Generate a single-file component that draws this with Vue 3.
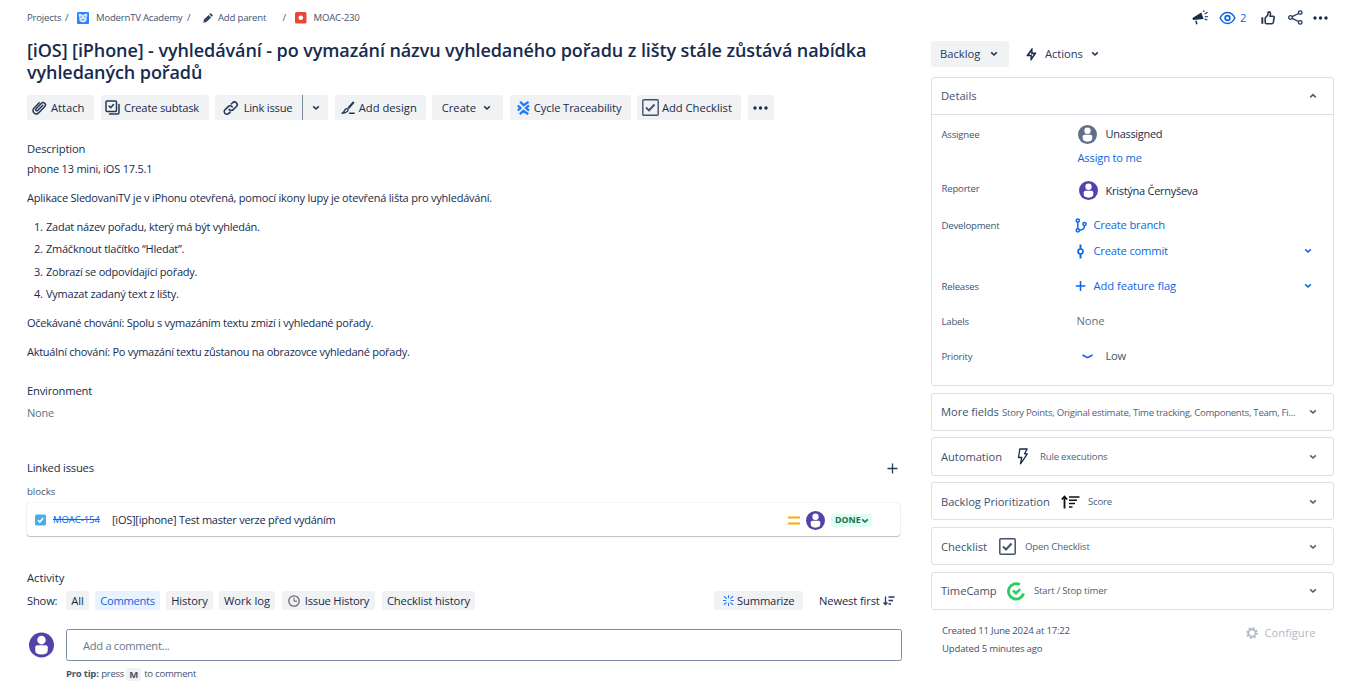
<script setup>
const steps = [
  'Zadat název pořadu, který má být vyhledán.',
  'Zmáčknout tlačítko “Hledat”.',
  'Zobrazí se odpovídající pořady.',
  'Vymazat zadaný text z lišty.',
]
const filters = [
  { label: 'All', cls: 'f-all' },
  { label: 'Comments', cls: 'f-comments active' },
  { label: 'History', cls: 'f-history' },
  { label: 'Work log', cls: 'f-worklog' },
  { label: 'Issue History', cls: 'f-issue', clock: true },
  { label: 'Checklist history', cls: 'f-checklist' },
]
const panels = [
  { title: 'More fields', sub: 'Story Points, Original estimate, Time tracking, Components, Team, Fi...', icon: '', cls: 'p-more' },
  { title: 'Automation', sub: 'Rule executions', icon: 'bolt', cls: 'p-auto' },
  { title: 'Backlog Prioritization', sub: 'Score', icon: 'sort', cls: 'p-backlog' },
  { title: 'Checklist', sub: 'Open Checklist', icon: 'check', cls: 'p-check' },
  { title: 'TimeCamp', sub: 'Start / Stop timer', icon: 'camp', cls: 'p-camp' },
]
</script>

<template>
  <div class="page">
    <main class="left">
      <nav class="crumbs">
        <span class="c-projects">Projects</span><span class="c-s1">/</span>
        <svg class="c-avatar" width="12" height="12" viewBox="0 0 12 12"><rect width="12" height="12" rx="1" fill="#2684ff" /><path d="M1.800 1.800h2.200l.9 1h2.200l.9-1h2.200v2.400L9.600 5.200v3.300L7.800 10.200H4.200L2.400 8.500V5.200L1.800 4.200z" fill="#d6e8ff" /><path d="M3.500 4.500h1.400v1.100H3.500zM7.100 4.500h1.400v1.100H7.100zM4.800 7.300h2.400v1H4.800z" fill="#2f7ae5" /></svg>
        <span class="c-name">ModernTV Academy</span><span class="c-s2">/</span>
        <svg class="c-pen" width="10" height="10" viewBox="0 0 10 10"><path d="M.3 9.700l.6-3.200L5.600 1.900l2.500 2.500L3.500 9zM6.200 1.300l.9-.9q.5-.4 1 0l1.500 1.500q.4.500 0 1l-.9.900z" fill="#344563" /></svg>
        <span class="c-parent">Add parent</span><span class="c-s3">/</span>
        <svg class="c-bug" width="12" height="12" viewBox="0 0 12 12"><rect width="11.500" height="11.500" rx="1.500" fill="#e5493a" /><circle cx="5.800" cy="5.800" r="2.300" fill="#fff" /></svg>
        <span class="c-key">MOAC-230</span>
      </nav>

      <h1>[iOS] [iPhone] - vyhledávání - po vymazání názvu vyhledaného pořadu z lišty stále zůstává nabídka<br>vyhledaných pořadů</h1>

      <div class="toolbar">
        <button class="btn b-attach">
          <svg width="15" height="16" viewBox="0 0 15 16" fill="none" stroke="#253858" stroke-width="1.500" stroke-linecap="round"><path d="M10.800 5.300L5.700 10.500a1.100 1.100 0 0 1-1.700-1.600L9.400 3.300a2.300 2.300 0 0 1 3.400 3.200L6.800 12.800a3.300 3.300 0 0 1-4.900-4.600L7.200 2.700" /></svg>
          <span>Attach</span>
        </button>
        <button class="btn b-subtask">
          <svg width="15" height="15" viewBox="0 0 15 15" fill="none" stroke="#253858" stroke-width="1.500" stroke-linejoin="round" stroke-linecap="round"><rect x="1" y="1" width="10.500" height="10.500" rx="1" /><path d="M4 6l1.700 1.700 2.800-3.200M14 4.500v8q0 1.500-1.500 1.500H4.500" /></svg>
          <span>Create subtask</span>
        </button>
        <div class="split">
          <button class="btn b-link">
            <svg width="16" height="14" viewBox="0 0 16 14" fill="none" stroke="#253858" stroke-width="1.600" stroke-linecap="round"><path d="M6.200 8.400a2.600 2.600 0 0 0 4 .2l3.200-3.100a2.600 2.600 0 0 0-3.800-3.700L8.300 3M9.200 5.800a2.600 2.600 0 0 0-4-.2L2 8.700a2.600 2.600 0 0 0 3.800 3.700L7.100 11.200" /></svg>
            <span>Link issue</span>
          </button>
          <button class="btn b-arrow"><svg class="chev" viewBox="0 0 8 6"><path d="M1.200 1.300L4 4l2.800-2.700" /></svg></button>
        </div>
        <button class="btn b-design">
          <svg width="14" height="14" viewBox="0 0 14 14" fill="none" stroke="#253858" stroke-linecap="round" stroke-linejoin="round"><path d="M12.300 1.500L7.800 6.800" stroke-width="2.100" /><path d="M1 12.300Q3 11.500 3.700 9.300 4.500 7.300 6 7.700 7.700 8.600 6.600 10.200 5 12.300 1 12.300z" stroke-width="1.400" /><path d="M8.500 12.300h4.700" stroke-width="1.500" /></svg>
          <span>Add design</span>
        </button>
        <button class="btn b-create"><span>Create</span><svg class="chev" viewBox="0 0 8 6"><path d="M1.200 1.300L4 4l2.800-2.700" /></svg></button>
        <button class="btn b-cycle">
          <svg width="13" height="14" viewBox="0 0 13 14" fill="none" stroke="#1d7afc" stroke-width="2.300"><path d="M3.200.8l3.500 3.500L11.500.9M.8 4.500L3.500 7 .8 9.500M12 4.300L9 7l3 2.700M2.800 13.200L6.400 9.700l4.800 3.500" /></svg>
          <span>Cycle Traceability</span>
        </button>
        <button class="btn b-check">
          <svg width="17" height="17" viewBox="0 0 17 17" fill="none" stroke="#42526e"><rect x=".8" y=".8" width="15.400" height="15.400" rx="1" stroke-width="1.400" /><path d="M4 8.500l3 3 5.500-6" stroke-width="1.900" /></svg>
          <span>Add Checklist</span>
        </button>
        <button class="btn b-dots"><svg width="15" height="4" viewBox="0 0 15 4" fill="#172b4d"><circle cx="2" cy="2" r="1.700" /><circle cx="7.500" cy="2" r="1.700" /><circle cx="13" cy="2" r="1.700" /></svg></button>
      </div>

      <h2 class="h-desc">Description</h2>
      <p>phone 13 mini, iOS 17.5.1</p>
      <p class="gap">Aplikace SledovaniTV je v iPhonu otevřená, pomocí ikony lupy je otevřená lišta pro vyhledávání.</p>
      <div class="steps gap">
        <div v-for="(s, i) in steps" :key="i" class="step"><span class="num">{{ i + 1 }}.</span><span>{{ s }}</span></div>
      </div>
      <p class="gap outcome">Očekávané chování: Spolu s vymazáním textu zmizí i vyhledané pořady.</p>
      <p class="gap outcome">Aktuální chování: Po vymazání textu zůstanou na obrazovce vyhledané pořady.</p>
      <h2 class="h-env">Environment</h2>
      <p class="none">None</p>

      <div class="linked-head">
        <h2>Linked issues</h2>
        <svg width="11" height="11" viewBox="0 0 11 11" stroke="#253858" stroke-width="1.300"><path d="M5.500.5v10M.5 5.500h10" /></svg>
      </div>
      <div class="blocks">blocks</div>
      <div class="issue">
        <svg width="11" height="12" viewBox="0 0 11 12"><rect y=".5" width="11" height="11" rx="1.500" fill="#4bade8" /><path d="M3 6.200l1.800 1.800L8.200 4" fill="none" stroke="#fff" stroke-width="1.600" /></svg>
        <s class="key">MOAC-154</s>
        <span class="summary">[iOS][iphone] Test master verze před vydáním</span>
        <svg class="prio" width="12" height="9" viewBox="0 0 12 9" fill="#ffab00"><rect y=".5" width="12" height="2" rx=".5" /><rect y="6.500" width="12" height="2" rx=".5" /></svg>
        <svg class="face" width="19" height="19" viewBox="0 0 24 24"><circle cx="12" cy="12" r="12" fill="#5243aa" /><circle cx="12" cy="7.300" r="4" fill="#fff" /><path d="M6 14.200q0-2 2-2h8q2 0 2 2v3q0 3.800-6 3.800t-6-3.800z" fill="#fff" /></svg>
        <span class="done"><b>DONE</b><svg class="chev" viewBox="0 0 8 6"><path d="M1.200 1.300L4 4l2.800-2.700" /></svg></span>
      </div>

      <h2 class="h-act">Activity</h2>
      <div class="show">
        <span class="show-label">Show:</span>
        <button v-for="f in filters" :key="f.label" class="filter" :class="f.cls">
          <svg v-if="f.clock" width="12" height="12" viewBox="0 0 12 12" fill="none"><circle cx="6" cy="6" r="5.200" stroke="#666d78" stroke-width="1.300" /><path d="M6 2.500V6.200" stroke="#d04437" stroke-width="1" /><path d="M6 6.200h3" stroke="#555" stroke-width="1" /></svg>
          <span>{{ f.label }}</span>
        </button>
        <button class="filter f-sum">
          <svg width="11" height="11" viewBox="0 0 11 11" stroke="#1d7afc" stroke-width="1.100" stroke-linecap="round"><path d="M5.500.6v2.200M5.500 8.200v2.200M.6 5.500h2.200M8.200 5.500h2.200M1.300 1.500l2 1.800M9.700 1.500l-2 1.800M1.300 9.500l2-1.800M9.700 9.500l-2-1.800" /></svg>
          <span>Summarize</span>
        </button>
        <button class="newest"><span>Newest first</span>
          <svg width="12" height="10" viewBox="0 0 12 10" fill="none" stroke="#253858" stroke-width="1.300"><path d="M2.500.5v8M.5 6.500l2 2 2-2M5.500 1h6M5.500 4.500h4.500M5.500 8h2.500" /></svg>
        </button>
      </div>
      <div class="comment">
        <svg width="25" height="26" viewBox="0 0 24 24"><circle cx="12" cy="12" r="12" fill="#5243aa" /><circle cx="12" cy="7.300" r="4.100" fill="#fff" /><path d="M6 14.200q0-2 2-2h8q2 0 2 2v3q0 3.800-6 3.800t-6-3.800z" fill="#fff" /></svg>
        <div class="box">Add a comment...</div>
      </div>
      <div class="tip"><b>Pro tip:</b><span class="press">press</span><kbd>M</kbd><span>to comment</span></div>
    </main>

    <aside class="right">
      <div class="actions">
        <svg width="17" height="16" viewBox="0 0 17 16" fill="#172b4d"><path d="M.5 8L9.300 2.500l2.300 6.600L1.200 9.900Q.2 9 .5 8zM3.200 10.800l1.500-.1.900 3.300-1.500.4zM11 1.800L11.700.3l1 .5-.6 1.500zM12.300 3.800l3-2 .6.900-3 1.900zM12.700 6.200h3.300v1.100h-3.300zM12.700 8.600l2.800.9-.4 1-2.700-.900z" /></svg>
        <svg class="a-eye" width="17" height="14" viewBox="0 0 18 14" fill="none" stroke="#0c66e4"><path d="M1.200 7Q4 1.300 9 1.300T16.800 7Q14 12.700 9 12.700T1.200 7z" stroke-width="1.600" /><circle cx="9" cy="7" r="2.500" stroke-width="1.800" /></svg>
        <span class="watch">2</span>
        <svg class="a-thumb" width="14" height="14" viewBox="0 0 14 14" fill="none" stroke="#253858" stroke-width="1.600" stroke-linejoin="round"><path d="M1.300 6.300v6.500" stroke-width="2" /><path d="M4.200 7L6.600 4.300l.5-2.600q.2-.8 1-.8 1.500.1 1.400 2L9 5.300h3.200q1.100.1 1 1.300l-.9 4.800q-.3 1.400-1.500 1.400H5.500q-1.300 0-1.300-1.300z" /></svg>
        <svg class="a-share" width="15" height="15" viewBox="0 0 15 15" fill="none" stroke="#253858" stroke-width="1.300"><circle cx="2.500" cy="7.500" r="1.800" /><circle cx="12.200" cy="2.600" r="1.800" /><circle cx="12.200" cy="12.400" r="1.800" /><path d="M4.200 6.700l6.300-3.200M4.200 8.300l6.300 3.200" /></svg>
        <svg class="a-dots" width="15" height="4" viewBox="0 0 15 4" fill="#172b4d"><circle cx="2" cy="2" r="1.700" /><circle cx="7.500" cy="2" r="1.700" /><circle cx="13" cy="2" r="1.700" /></svg>
      </div>
      <div class="status">
        <button class="btn backlog"><span>Backlog</span><svg class="chev" viewBox="0 0 8 6"><path d="M1.200 1.300L4 4l2.800-2.700" /></svg></button>
        <svg class="s-bolt" width="11" height="13" viewBox="0 0 11 13" fill="#172b4d"><path d="M6.600.2v4.300h3.100q1 .2.500 1.100L5.300 12.500q-.5.500-.9-.1V8.300H1.100Q.2 8 .6 7.200L5.700.3q.5-.5.9-.1zM5.200 3.800L3.200 6.700h2.700l-.1 2.300L7.700 6.200H5.100z" fill-rule="evenodd" /></svg>
        <span class="s-actions">Actions</span><svg class="chev" viewBox="0 0 8 6"><path d="M1.200 1.300L4 4l2.800-2.700" /></svg>
      </div>

      <section class="details">
        <header><span>Details</span><svg class="chev grey" viewBox="0 0 8 6"><path d="M1.200 4.300L4 1.600l2.800 2.700" /></svg></header>
        <div class="fields">
          <div class="row r1"><label>Assignee</label>
            <svg class="person" width="19" height="19" viewBox="0 0 24 24"><circle cx="12" cy="12" r="12" fill="#626f86" /><circle cx="12" cy="7.300" r="4" fill="#fff" /><path d="M6 14.200q0-2 2-2h8q2 0 2 2v3q0 3.800-6 3.800t-6-3.800z" fill="#fff" /></svg><span class="user">Unassigned</span></div>
          <div class="row r2"><a class="assign">Assign to me</a></div>
          <div class="row r3"><label>Reporter</label>
            <svg class="person p2" width="19" height="19" viewBox="0 0 24 24"><circle cx="12" cy="12" r="12" fill="#5243aa" /><circle cx="12" cy="7.300" r="4" fill="#fff" /><path d="M6 14.200q0-2 2-2h8q2 0 2 2v3q0 3.800-6 3.800t-6-3.800z" fill="#fff" /></svg><span class="user reporter">Kristýna Černyševa</span></div>
          <div class="row r4"><label>Development</label>
            <svg class="dev" width="12" height="15" viewBox="0 0 12 15" fill="none" stroke="#0c66e4" stroke-width="1.500"><circle cx="2.800" cy="2.500" r="1.600" /><circle cx="2.800" cy="12.300" r="1.600" /><circle cx="9.500" cy="6" r="1.600" /><path d="M2.800 4v6.800M9.500 7.500q0 4.500-5.100 4.700" /></svg><a class="tight">Create branch</a></div>
          <div class="row r5">
            <svg class="dev" width="12" height="15" viewBox="0 0 12 15" fill="none" stroke="#0c66e4" stroke-width="1.600"><circle cx="5.500" cy="7.500" r="2.500" /><path d="M5.500.5V5M5.500 10v4.500" stroke-width="2" /></svg><a class="tight">Create commit</a><svg class="chev blue" viewBox="0 0 8 6"><path d="M1.200 1.300L4 4l2.800-2.700" /></svg></div>
          <div class="row r6"><label>Releases</label>
            <svg class="dev" width="12" height="12" viewBox="0 0 12 12" stroke="#0c66e4" stroke-width="1.500"><path d="M5.500 1v10M.8 6h9.500" /></svg><a>Add feature flag</a><svg class="chev blue" viewBox="0 0 8 6"><path d="M1.200 1.300L4 4l2.800-2.700" /></svg></div>
          <div class="row r7"><label>Labels</label><span class="lnone">None</span></div>
          <div class="row r8"><label>Priority</label><svg class="low" width="11" height="5" viewBox="0 0 11 5" fill="none" stroke="#1868f2" stroke-width="1.600" stroke-linecap="round"><path d="M1 1.200l3.600 2q.9.400 1.800 0l3.600-2" /></svg><span class="lowt">Low</span></div>
        </div>
      </section>

      <section v-for="p in panels" :key="p.title" class="panel" :class="p.cls">
        <span class="title">{{ p.title }}</span>
        <svg v-if="p.icon === 'bolt'" class="pi" width="12" height="17" viewBox="0 0 12 17" fill="none" stroke="#172b4d" stroke-width="1.300" stroke-linejoin="round"><path d="M2.800 1h7.400L7.500 5.800h2.800L3.500 15.800l1.200-6.300H1.500z" /></svg>
        <svg v-if="p.icon === 'sort'" class="pi" width="19" height="14" viewBox="0 0 19 14" fill="none" stroke="#111"><path d="M3.500 13.500V1.500M.8 4.500l2.700-3 2.700 3" stroke-width="1.800" /><path d="M8 2h10.500M8 5.200h8M8 8.500h6M8 12h3.500" stroke-width="1.600" /></svg>
        <svg v-if="p.icon === 'check'" class="pi" width="17" height="17" viewBox="0 0 17 17" fill="none" stroke="#42526e"><rect x=".8" y=".8" width="15.400" height="15.400" rx="1" stroke-width="1.500" /><path d="M4 8.500l3 3 5.500-6" stroke-width="2" /></svg>
        <svg v-if="p.icon === 'camp'" class="pi" width="18" height="19" viewBox="0 0 18 19" fill="none" stroke="#25cf60"><path d="M12.800 2.600A7.700 7.700 0 1 0 16.600 11.500" stroke-width="2.800" /><path d="M6 8.500l3 2.700 4.200-4" stroke-width="2.500" /></svg>
        <span class="sub">{{ p.sub }}</span>
        <svg class="chev grey" viewBox="0 0 8 6"><path d="M1.200 1.300L4 4l2.800-2.700" /></svg>
      </section>

      <footer>
        <div class="dates"><span>Created 11 June 2024 at 17:22</span><span>Updated 5 minutes ago</span></div>
        <svg class="gear" width="12" height="12" viewBox="0 0 12 12" fill="none" stroke="#b3b9c4"><circle cx="6" cy="6" r="3.700" stroke-width="1.900" /><circle cx="6" cy="6" r="5.200" stroke-width="1.400" stroke-dasharray="2 2.080" /></svg>
        <span class="conf">Configure</span>
      </footer>
    </aside>
  </div>
</template>

<style>
html, body { margin: 0; background: #fff; overflow: hidden; }
</style>
<style scoped>
* { box-sizing: border-box; }
.page { width: 1362px; height: 694px; display: flex; overflow: hidden; font: 11.2px/20px "Open Sans", "Noto Sans", sans-serif; color: #172b4d; white-space: nowrap; }
svg { flex: none; display: block; }
button { border: 0; padding: 0; margin: 0; background: none; font: inherit; color: inherit; display: flex; align-items: center; text-align: left; white-space: nowrap; }
h1, h2, p { margin: 0; }
.left { width: 875px; margin-left: 27px; }
.right { width: 403px; margin-left: 29px; }
.chev { width: 8px; height: 6px; fill: none; stroke: #253858; stroke-width: 1.600; }
.chev.grey { stroke: #505f79; }
.chev.blue { stroke: #0c66e4; }

.crumbs { height: 34px; display: flex; align-items: center; font-size: 9.600px; letter-spacing: -.2px; color: #44546f; padding-top: 1px; }
.crumbs span { flex: none; }
.c-projects { width: 38px; }
.c-s1 { width: 12px; }
.c-avatar { margin-right: 7px; }
.c-name { width: 91px; letter-spacing: -.22px; }
.c-s2 { width: 16px; }
.c-pen { margin-right: 5px; }
.c-parent { width: 64.500px; }
.c-s3 { width: 12px; }
.c-bug { margin-right: 7px; }

h1 { margin-top: 5px; height: 44px; font-size: 18px; line-height: 22px; font-weight: 600; letter-spacing: -.088px; }
.toolbar { margin-top: 12px; height: 25px; display: grid; grid-template-columns: 67px 108px 113px 91px 71px 121px 104px 26px; gap: 6.570px; }
.btn { height: 25px; background: #f1f2f4; border-radius: 2.500px; font-weight: 500; }
.b-attach { padding-left: 5px; gap: 4px; }
.b-subtask { padding-left: 4px; gap: 4.500px; letter-spacing: -.2px; }
.split { display: flex; }
.b-link { width: 87px; padding-left: 7.500px; gap: 5px; border-radius: 2.500px 0 0 2.500px; letter-spacing: -.22px; }
.b-arrow { width: 26px; border-left: 1px solid #7a869a; justify-content: center; border-radius: 0 2.500px 2.500px 0; }
.b-design { padding-left: 6px; gap: 4px; letter-spacing: .02px; }
.b-create { padding: 0 12px 0 9.500px; justify-content: space-between; }
.b-cycle { padding-left: 7px; gap: 4px; letter-spacing: -.12px; }
.b-check { padding-left: 5px; gap: 2.500px; }
.b-dots { justify-content: center; }

h2 { font-size: 11.2px; font-weight: 500; height: 20px; line-height: 20px; letter-spacing: -.2px; }
.h-desc { margin-top: 19px; letter-spacing: -.13px; }
p { height: 20px; font-size: 11px; letter-spacing: -.215px; }
.outcome { letter-spacing: -.265px; }
.gap { margin-top: 9px; }
.step { display: flex; height: 22.400px; line-height: 20px; font-size: 11px; letter-spacing: -.24px; }
.steps { height: 87px; }
.num { width: 19px; padding-left: 7px; }
.h-env { margin-top: 19px; }
.none { margin-top: 2px; color: #626f86; }
.linked-head { margin-top: 35px; display: flex; justify-content: space-between; align-items: center; padding-right: 4px; }
.blocks { margin-top: 4px; height: 19px; font-size: 9.600px; color: #44546f; font-weight: 500; }
.issue { margin-top: 2px; width: 873px; height: 33px; display: flex; align-items: center; padding-left: 7.500px; border-radius: 3px; box-shadow: 0 1px 1px rgba(9, 30, 66, .25), 0 0 1px rgba(9, 30, 66, .31); }
.key { width: 59px; margin-left: 7.500px; font-size: 9.600px; letter-spacing: -.12px; color: #0c66e4; }
.summary { width: 676px; font-size: 11px; letter-spacing: -.25px; }
.prio { margin-top: 1px; }
.face { margin-left: 6px; margin-top: 1px; }
.done { margin-left: 6px; margin-top: 2px; width: 41px; height: 13px; background: #dcfff1; color: #216e4e; border-radius: 2.500px; font-size: 8.800px; line-height: 13px; display: flex; align-items: center; padding-left: 4px; }
.done .chev { stroke: #216e4e; }

.h-act { margin-top: 32px; letter-spacing: 0; }
.show { margin-top: 3px; height: 19px; display: flex; align-items: center; }
.show-label { width: 39px; letter-spacing: -.2px; }
.filter { height: 19px; background: #f1f2f4; border-radius: 2.500px; justify-content: center; font-weight: 500; }
.active { background: #e9f2ff; color: #0c66e4; }
.f-all { width: 23px; }
.f-comments { width: 65px; margin-left: 6px; letter-spacing: -.3px; }
.f-history { width: 47px; margin-left: 6px; letter-spacing: -.1px; }
.f-worklog { width: 56px; margin-left: 6px; }
.f-issue { width: 93px; margin-left: 7px; gap: 5px; letter-spacing: -.2px; }
.f-checklist { width: 93px; margin-left: 7px; letter-spacing: -.12px; }
.f-sum { width: 89px; margin-left: 239px; gap: 3.500px; letter-spacing: -.15px; }
.newest { margin-left: 16px; gap: 3.500px; font-weight: 500; letter-spacing: -.14px; }
.comment { margin-top: 19px; height: 32px; display: flex; align-items: center; padding-left: 2px; }
.box { margin-left: 12px; width: 836px; height: 32px; border: 1px solid #7e8da5; border-radius: 2.500px; padding: 1px 0 0 16px; line-height: 30px; color: #6b778c; letter-spacing: -.32px; }
.tip { margin-top: 3px; margin-left: 39px; display: flex; align-items: center; font-size: 9.600px; letter-spacing: -.26px; color: #44546f; }
.press { margin-left: 2.500px; }
kbd { font: inherit; font-weight: 700; width: 15px; height: 13px; line-height: 13px; text-align: center; background: #f1f2f4; border-radius: 2px; margin: 0 3px 0 2px; }

.actions { height: 34px; padding-top: 1px; display: flex; align-items: center; padding-left: 261px; }
.a-eye { margin-left: 10px; }
.watch { margin-left: 4px; color: #0c66e4; width: 18px; }
.a-thumb { margin-left: 3px; }
.a-share { margin-left: 12.500px; }
.a-dots { margin-left: 10px; }
.status { margin-top: 7px; height: 26px; display: flex; align-items: center; color: #253858; }
.backlog { width: 78px; height: 26px; padding: 0 11.500px 0 9px; justify-content: space-between; }
.s-bolt { margin-left: 17px; }
.s-actions { margin-left: 8px; width: 46px; font-weight: 500; letter-spacing: -.05px; }

.details { margin-top: 10px; height: 309px; border: 1px solid #dcdfe4; border-radius: 3px; }
.details header { height: 37px; border-bottom: 1px solid #dcdfe4; display: flex; align-items: center; justify-content: space-between; padding: 0 16px 0 9px; color: #42526e; font-weight: 500; }
.fields { padding: 9px 0 0 9.500px; }
.row { height: 20px; display: flex; align-items: center; }
label { width: 136px; padding-top: 1px; font-size: 9.600px; font-weight: 500; color: #44546f; letter-spacing: -.2px; }
.person { margin-right: 9px; }
.user { font-size: 11px; letter-spacing: -.3px; }
.reporter { margin-top: 1px; letter-spacing: -.27px; }
.r2 { margin-top: 4px; padding-left: 136px; }
.r3 { margin-top: 12px; }
.r3 label { padding-top: 0; margin-top: -2px; }
.r3 .p2 { margin-left: 1px; margin-right: 8px; }
.r4 { margin-top: 15px; }
.row a { color: #0c66e4; font-weight: 500; letter-spacing: -.05px; }
.row a.assign { font-weight: 400; letter-spacing: -.2px; }
.row a.tight { letter-spacing: -.2px; }
.dev { margin-left: -2.500px; margin-right: 6.500px; }
.r5 { margin-top: 6px; padding-left: 136px; }
.r6, .r7, .r8 { margin-top: 15px; }
.row .chev { margin-left: auto; margin-right: 21.500px; }
.lnone { color: #626f86; margin-left: -1px; letter-spacing: -.1px; }
.low { margin-left: 4.500px; margin-right: 12.500px; }
.lowt { color: #44546f; letter-spacing: -.3px; }

.panel { margin-top: 6.500px; height: 38.300px; border: 1px solid #dcdfe4; border-radius: 3px; display: flex; align-items: center; padding: 1px 16px 0 9px; }
.title { color: #42526e; font-weight: 500; flex: none; letter-spacing: -.06px; }
.sub { font-size: 9.600px; color: #505f79; letter-spacing: -.2px; }
.panel .chev { margin-left: auto; }
.p-more .title { width: 61px; }
.p-more .sub { letter-spacing: -.27px; padding-top: 1px; }
.p-auto .title { width: 76px; }
.p-auto .pi { margin-right: 11px; }
.p-backlog .title { width: 120px; }
.p-backlog .pi { margin-right: 8px; }
.p-check .title { width: 58px; }
.p-check .pi { margin-right: 9px; }
.p-check .sub { letter-spacing: -.15px; }
.p-camp .title { width: 66px; }
.p-camp .pi { margin-right: 9px; }

footer { margin-top: 12px; display: flex; align-items: flex-start; padding-left: 11px; }
.dates { display: flex; flex-direction: column; width: 303.500px; font-size: 9.600px; line-height: 18px; color: #42526e; letter-spacing: -.2px; }
.gear { margin-top: 5px; }
.conf { margin-left: 7px; margin-top: 1px; color: #b3b9c4; font-weight: 500; }
</style>
